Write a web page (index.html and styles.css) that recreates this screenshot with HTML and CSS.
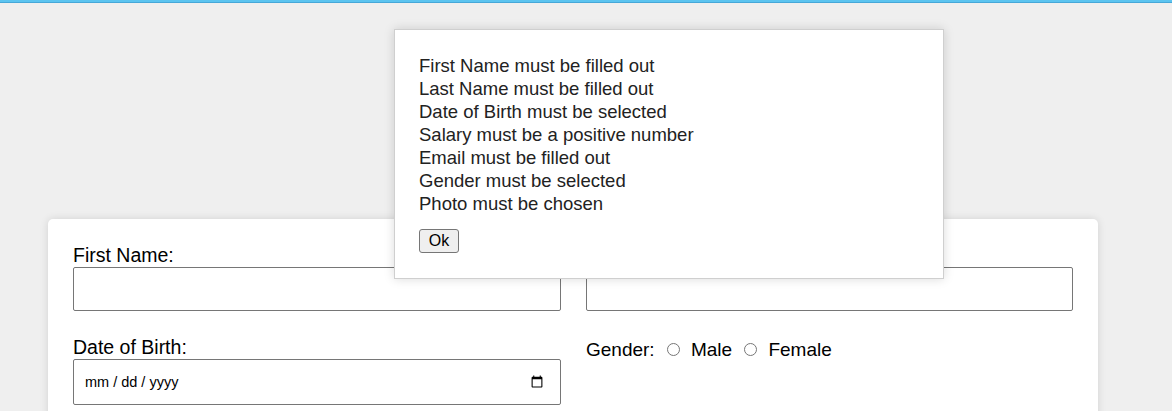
FILE: index.html
```html
<!DOCTYPE html>
<html lang="en">
<head>
<meta charset="utf-8">
<title>Employee Form</title>
<link rel="stylesheet" href="styles.css">
</head>
<body>
<div class="topbar"></div>
<main class="page">
  <form class="card">
    <div class="field">
      <label class="label" for="fn">First Name:</label>
      <input class="input" id="fn" type="text">
    </div>
    <div class="field">
      <label class="label" for="ln">Last Name:</label>
      <input class="input" id="ln" type="text">
    </div>
    <div class="field">
      <label class="label" for="dob">Date of Birth:</label>
      <input class="input date" id="dob" type="date">
    </div>
    <div class="field">
      <div class="label gender">Gender: <input type="radio" name="g" id="m" class="radio"><label for="m">Male</label> <input type="radio" name="g" id="f" class="radio"><label for="f">Female</label></div>
    </div>
  </form>
</main>
<div class="dialog">
  <div class="messages">
    First Name must be filled out<br>
    Last Name must be filled out<br>
    Date of Birth must be selected<br>
    Salary must be a positive number<br>
    Email must be filled out<br>
    Gender must be selected<br>
    Photo must be chosen
  </div>
  <button class="ok" type="button">Ok</button>
</div>
</body>
</html>
```
FILE: styles.css
```css
html, body {
  margin: 0;
  padding: 0;
}
body {
  background: #efefef;
  font-family: "Liberation Sans", Arial, sans-serif;
  color: #000;
  height: 411px;
  overflow: hidden;
}
.topbar {
  height: 2px;
  background: #5cc4f0;
  border-bottom: 1px solid #46a8d8;
}
.page {
  padding: 216px 74px 0 48px;
}
.card {
  background: #fff;
  border-radius: 5px;
  box-shadow: 0 0 8px rgba(0, 0, 0, 0.12);
  padding: 25px 25px 40px;
  display: grid;
  grid-template-columns: 488px 487px;
  column-gap: 25px;
  row-gap: 25px;
}
.field {
  display: flex;
  flex-direction: column;
}
.label {
  font-size: 19.5px;
  line-height: 23px;
}
.input {
  box-sizing: border-box;
  height: 44px;
  border: 1px solid #767676;
  border-radius: 2px;
  margin: 0;
  padding: 0 10px;
  background: #fff;
}
.date {
  height: 46px;
  padding: 0 14px 0 10px;
  font-family: "Liberation Sans", Arial, sans-serif;
  font-size: 14.5px;
  color: #000;
}
.date::-webkit-datetime-edit-text {
  padding: 0 3px;
}
.date::-webkit-datetime-edit-fields-wrapper {
  padding: 0;
}
.gender {
  padding-top: 2px;
  font-size: 19px;
}
.radio {
  width: 13px;
  height: 13px;
  margin: 0 11px 0 7px;
  vertical-align: 0;
}
.dialog {
  position: absolute;
  left: 394px;
  top: 29px;
  width: 548px;
  box-sizing: content-box;
  background: #fff;
  border: 1px solid #cfcfcf;
  box-shadow: 0 0 10px rgba(0, 0, 0, 0.15);
  padding: 0;
}
.messages {
  padding: 24px 24px 0;
  font-size: 18.5px;
  line-height: 23px;
  color: #222;
}
.ok {
  margin: 14px 24px 25px;
  box-sizing: border-box;
  width: 40px;
  height: 24px;
  padding: 0;
  font-family: "Liberation Sans", Arial, sans-serif;
  font-size: 16px;
  color: #000;
  background: #efefef;
  border: 1px solid #767676;
  border-radius: 3px;
  display: block;
}
```
